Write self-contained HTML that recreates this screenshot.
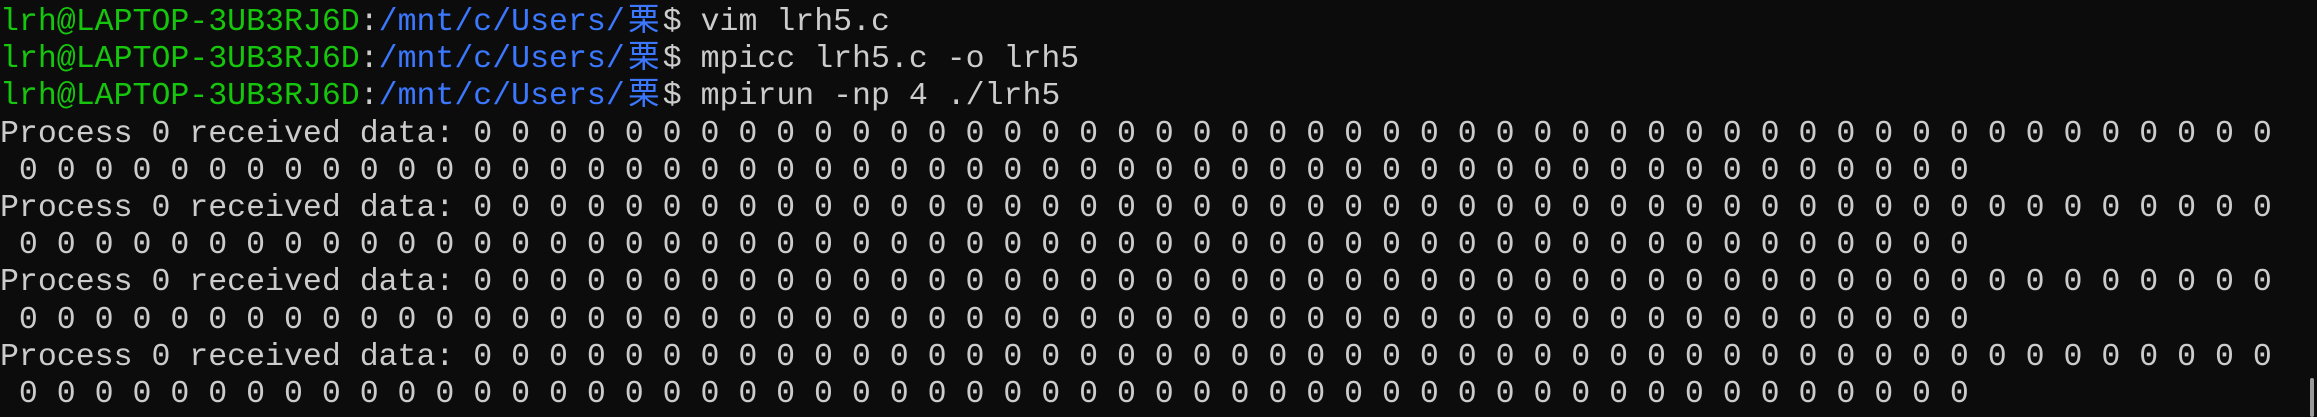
<!DOCTYPE html>
<html><head><meta charset="utf-8"><style>
html,body{margin:0;padding:0;background:#0c0c0c;width:2317px;height:417px;overflow:hidden}
pre{margin:0;position:absolute;left:0;top:4px;font-family:"Liberation Mono","Noto Sans CJK SC",monospace;font-size:31.55px;line-height:37.2px;color:#cccccc;white-space:pre}
.g{color:#16c60c}.b{color:#3b78ff}
.c{display:inline-block;width:38px;text-align:center}
.sb{position:absolute;left:2310px;top:378px;width:4px;height:39px;background:#9a9a9a;border-radius:2px}
</style></head><body>
<pre><span class="g">lrh@LAPTOP-3UB3RJ6D</span>:<span class="b">/mnt/c/Users/<span class="c">栗</span></span>$ vim lrh5.c
<span class="g">lrh@LAPTOP-3UB3RJ6D</span>:<span class="b">/mnt/c/Users/<span class="c">栗</span></span>$ mpicc lrh5.c -o lrh5
<span class="g">lrh@LAPTOP-3UB3RJ6D</span>:<span class="b">/mnt/c/Users/<span class="c">栗</span></span>$ mpirun -np 4 ./lrh5
Process 0 received data: 0 0 0 0 0 0 0 0 0 0 0 0 0 0 0 0 0 0 0 0 0 0 0 0 0 0 0 0 0 0 0 0 0 0 0 0 0 0 0 0 0 0 0 0 0 0 0 0
 0 0 0 0 0 0 0 0 0 0 0 0 0 0 0 0 0 0 0 0 0 0 0 0 0 0 0 0 0 0 0 0 0 0 0 0 0 0 0 0 0 0 0 0 0 0 0 0 0 0 0 0
Process 0 received data: 0 0 0 0 0 0 0 0 0 0 0 0 0 0 0 0 0 0 0 0 0 0 0 0 0 0 0 0 0 0 0 0 0 0 0 0 0 0 0 0 0 0 0 0 0 0 0 0
 0 0 0 0 0 0 0 0 0 0 0 0 0 0 0 0 0 0 0 0 0 0 0 0 0 0 0 0 0 0 0 0 0 0 0 0 0 0 0 0 0 0 0 0 0 0 0 0 0 0 0 0
Process 0 received data: 0 0 0 0 0 0 0 0 0 0 0 0 0 0 0 0 0 0 0 0 0 0 0 0 0 0 0 0 0 0 0 0 0 0 0 0 0 0 0 0 0 0 0 0 0 0 0 0
 0 0 0 0 0 0 0 0 0 0 0 0 0 0 0 0 0 0 0 0 0 0 0 0 0 0 0 0 0 0 0 0 0 0 0 0 0 0 0 0 0 0 0 0 0 0 0 0 0 0 0 0
Process 0 received data: 0 0 0 0 0 0 0 0 0 0 0 0 0 0 0 0 0 0 0 0 0 0 0 0 0 0 0 0 0 0 0 0 0 0 0 0 0 0 0 0 0 0 0 0 0 0 0 0
 0 0 0 0 0 0 0 0 0 0 0 0 0 0 0 0 0 0 0 0 0 0 0 0 0 0 0 0 0 0 0 0 0 0 0 0 0 0 0 0 0 0 0 0 0 0 0 0 0 0 0 0</pre>
<div class="sb"></div>
</body></html>
